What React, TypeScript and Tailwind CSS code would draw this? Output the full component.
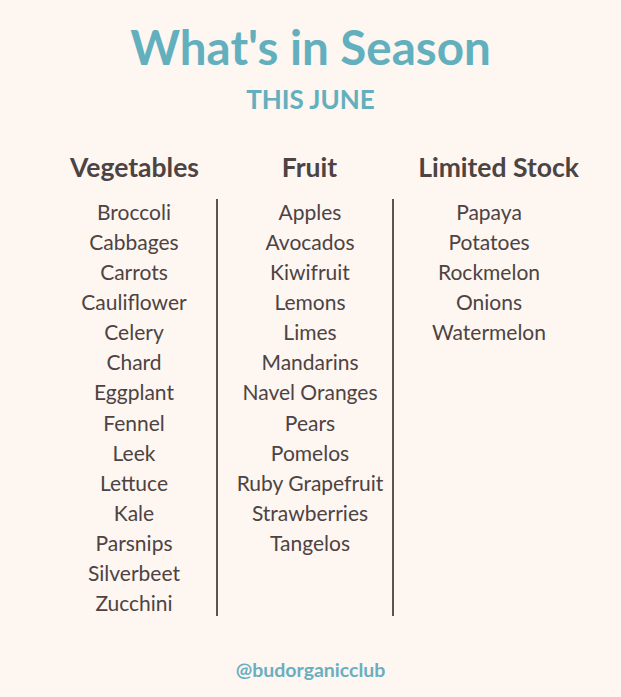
import React from "react";

const veg = ["Broccoli","Cabbages","Carrots","Cauliflower","Celery","Chard","Eggplant","Fennel","Leek","Lettuce","Kale","Parsnips","Silverbeet","Zucchini"];
const fruit = ["Apples","Avocados","Kiwifruit","Lemons","Limes","Mandarins","Navel Oranges","Pears","Pomelos","Ruby Grapefruit","Strawberries","Tangelos"];
const limited = ["Papaya","Potatoes","Rockmelon","Onions","Watermelon"];

function List({ items }: { items: string[] }) {
  return (
    <div className="flex flex-col">
      {items.map((i) => (
        <div key={i} className="h-[30.08px] leading-[30px]">{i}</div>
      ))}
    </div>
  );
}

function Divider() {
  return <div className="w-[2px] bg-[#5b5252] my-[2px] shrink-0" />;
}

export default function App() {
  return (
    <div
      className="w-[621px] h-[697px] bg-[#fdf6f1] text-[#4d4343] flex flex-col"
      style={{ fontFamily: "Lato, 'Noto Sans', sans-serif" }}
    >
      <h1 className="text-center text-[47.5px] font-bold text-[#62afbd] leading-none mt-[23px]">
        What's in Season
      </h1>
      <div className="text-center text-[26px] font-bold text-[#62afbd] leading-none mt-[15px]">
        THIS JUNE
      </div>
      <div className="flex mt-[42px] text-[26.5px] font-bold leading-none">
        <div className="ml-[52px] w-[165px] text-center">Vegetables</div>
        <div className="w-[175px] pl-[10px] text-center">Fruit</div>
        <div className="w-[192px] pl-[21px] text-center">Limited Stock</div>
      </div>
      <div className="flex mt-[17px] text-[21px] text-center">
        <div className="ml-[52px] w-[164px]">
          <List items={veg} />
        </div>
        <Divider />
        <div className="w-[174px] pl-[10px]">
          <List items={fruit} />
        </div>
        <Divider />
        <div className="w-[192px] pr-[2px]">
          <List items={limited} />
        </div>
      </div>
      <div className="text-center text-[19.5px] font-bold text-[#6aafc0] mt-[42px] leading-none">
        @budorganicclub
      </div>
    </div>
  );
}
